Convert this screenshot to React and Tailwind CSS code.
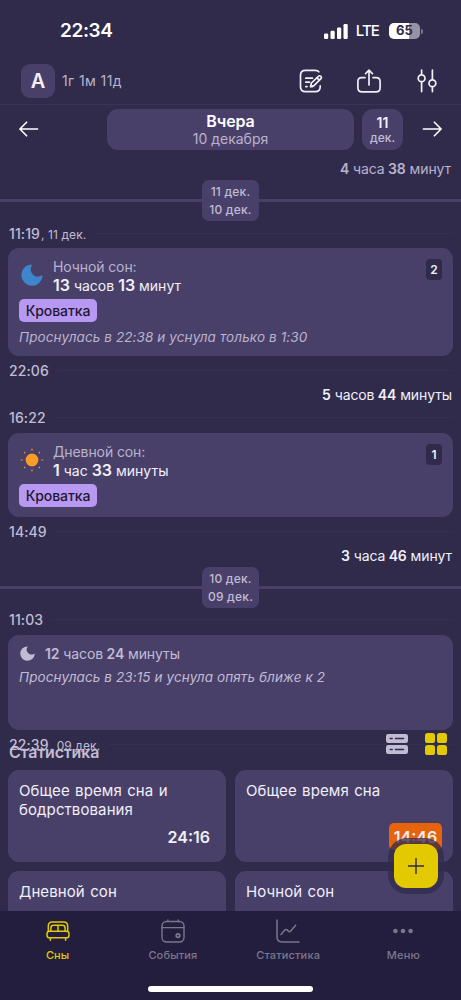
import { clsx } from 'clsx';

const MoonIcon = ({ className }) => (
  <svg viewBox="0 0 24 24" className={className} fill="currentColor">
    <path d="M10.800.6A11.600 11.600 0 1 0 23.500 13.400c.2-.9-.6-1.200-1.300-.8A7.700 7.700 0 0 1 11.700 2.100c.5-.8 0-1.600-.9-1.500Z" />
  </svg>
);

const SunIcon = () => (
  <svg viewBox="0 0 24 24" className="h-6 w-6 text-[#f99d27]" fill="none" stroke="currentColor" strokeWidth="1.200" strokeLinecap="round">
    <circle cx="12" cy="12" r="6.400" fill="currentColor" stroke="none" />
    <path d="M12 1.200v1M12 21.800v1M1.200 12h1M21.800 12h1M4.400 4.400l.5.5M19.100 19.100l.5.5M4.400 19.600l.5-.5M19.100 4.900l.5-.5" />
  </svg>
);

const NoteIcon = () => (
  <svg viewBox="0 0 24 24" className="h-6 w-6" fill="none" stroke="currentColor" strokeWidth="1.700" strokeLinecap="round" strokeLinejoin="round">
    <path d="M19.800 2.800C19 1.700 17.800 1.400 16 1.400H6.500C3 1.400 1.500 2.700 1.500 6.200v11.600c0 3.500 1.500 4.900 5 4.900h9.800c3.500 0 4.900-1.400 4.900-4.900v-1" />
    <path d="M6.800 9.200h6.600M6.800 13.200h3.600M6.800 17.600h1.200M11.600 17.600h2" />
    <path d="m12.400 14 7-6.700a1.700 1.700 0 0 1 2.500 2.400l-6.900 6.900-3.400.9Z" />
    <path d="m18 8.800 2.300 2.300" />
  </svg>
);

const ShareIcon = () => (
  <svg viewBox="0 0 24 24" className="h-6 w-6" fill="none" stroke="currentColor" strokeWidth="1.700" strokeLinecap="round" strokeLinejoin="round">
    <path d="M8 8.600H4.800C2 8.600.9 9.800.9 12.500v6.200c0 2.900 1.300 4.100 4.200 4.100h13.800c2.900 0 4.200-1.200 4.200-4.100v-6.200c0-2.700-1.100-3.900-3.900-3.900H16" />
    <path d="M12 16V1.200M8.600 4.600 12 1.200l3.400 3.400" />
  </svg>
);

const SlidersIcon = () => (
  <svg viewBox="0 0 24 24" className="h-6 w-6" fill="none" stroke="currentColor" strokeWidth="1.700" strokeLinecap="round">
    <path d="M6.600 1.200v3.600M6.600 13v9.600M17.400 1.200v9M17.400 18.400v4.200" />
    <circle cx="6.600" cy="9.200" r="3.400" />
    <circle cx="17.400" cy="14.300" r="3.400" />
  </svg>
);

const Arrow = ({ className }) => (
  <svg viewBox="0 0 20 16" className={clsx('-mt-px h-4 w-5', className)} fill="none" stroke="#fff" strokeWidth="1.600" strokeLinecap="round" strokeLinejoin="round">
    <path d="M1.200 8h17.400M7.600 1.200.9 8l6.700 6.800" />
  </svg>
);

const BedIcon = () => (
  <svg viewBox="0 0 24 20" className="h-5 w-6" fill="none" stroke="currentColor" strokeWidth="1.500" strokeLinecap="round" strokeLinejoin="round">
    <path d="M2.300 10.300V5.200C2.300 2.300 3.500 1 6.400 1h11.200c2.900 0 4.100 1.300 4.100 4.200v5.100" />
    <path d="M4.900 10V7c0-1.900.8-2.700 2.700-2.700h8.800c1.900 0 2.700.8 2.700 2.700v3M12 4.300V10" />
    <rect x="1" y="10.200" width="22" height="6.600" rx="2.600" />
    <path d="M4.400 17v2.200M19.600 17v2.200" />
  </svg>
);

const CalendarIcon = () => (
  <svg viewBox="0 0 24 24" className="h-6 w-6" fill="none" stroke="currentColor" strokeWidth="1.400" strokeLinecap="round">
    <rect x="1" y="2.500" width="22" height="20.500" rx="4.500" />
    <path d="M1 8.600h22M6.900.9v1.600M17.200.9v1.600" />
    <circle cx="17" cy="16.600" r="1.800" strokeWidth="1.700" />
  </svg>
);

const ChartIcon = () => (
  <svg viewBox="0 0 24 24" className="h-6 w-6" fill="none" stroke="currentColor" strokeWidth="1.500" strokeLinecap="round" strokeLinejoin="round">
    <path d="M1 1v16.800C1 21.500 2.500 23 6.200 23H23" />
    <path d="M5 15.400 8.800 11c.7-.8 1.600-.8 2.300-.1l1.300 1.300c.7.7 1.600.7 2.300-.1L19.600 6.200" />
  </svg>
);

const DotsIcon = () => (
  <svg viewBox="0 0 24 24" className="h-6 w-6" fill="currentColor">
    <circle cx="4.400" cy="12" r="2.300" />
    <circle cx="12" cy="12" r="2.300" />
    <circle cx="19.600" cy="12" r="2.300" />
  </svg>
);

const ListViewIcon = () => (
  <svg viewBox="0 0 22 20" className="h-5 w-[22px]">
    <rect width="22" height="9" rx="2.200" fill="#c1bcd3" />
    <rect y="11" width="22" height="9" rx="2.200" fill="#c1bcd3" />
    <path d="M4.200 4.500h2M9.500 4.500h8M4.200 15.500h2M9.500 15.500h8" stroke="#302b4b" strokeWidth="1.500" strokeLinecap="round" />
  </svg>
);

const GridViewIcon = () => (
  <svg viewBox="0 0 22 22" className="h-[22px] w-[22px]" fill="#e2c900">
    <rect width="10" height="10" rx="2.600" />
    <rect x="12" width="10" height="10" rx="2.600" />
    <rect y="12" width="10" height="10" rx="2.600" />
    <rect x="12" y="12" width="10" height="10" rx="2.600" />
  </svg>
);

const StatusBar = () => (
  <div className="flex h-[58px] shrink-0 items-center justify-between pt-1 pr-[38px] pl-[60px] text-white">
    <span className="text-[19px] font-semibold tracking-[-0.4px]">22:34</span>
    <div className="flex items-center">
      <svg viewBox="0 0 24 15" className="h-[15px] w-6" fill="currentColor">
        <rect y="9.500" width="4.200" height="5.500" rx="1.200" />
        <rect x="6.500" y="6.800" width="4.200" height="8.200" rx="1.200" />
        <rect x="13" y="3.600" width="4.200" height="11.400" rx="1.200" />
        <rect x="19.500" width="4.200" height="15" rx="1.200" />
      </svg>
      <span className="ml-2 pt-px text-[15px] font-medium tracking-[-0.900px]">LTE</span>
      <div className="ml-[10px] flex h-4 w-[31px] items-center justify-center rounded-[5px] bg-linear-to-r from-white from-65% to-[#9693a5] to-65% text-[13px] font-bold text-[#302b4b]">
        65
      </div>
      <div className="ml-px h-[5px] w-[2px] rounded-r-full bg-[#7d7990]" />
    </div>
  </div>
);

const Header = () => (
  <div className="flex h-[47px] shrink-0 items-center border-b border-[#3a3455] pr-[22px] pl-[21px] text-[#f1eff8]">
    <div className="flex h-[34px] w-[34px] items-center justify-center rounded-[9px] bg-[#49406a] text-[20px] font-semibold">A</div>
    <span className="ml-[7px] pb-px text-[14px] tracking-[0.4px] text-[#b9b3cd]">1г 1м 11д</span>
    <div className="ml-auto flex gap-[34px]">
      <NoteIcon />
      <ShareIcon />
      <SlidersIcon />
    </div>
  </div>
);

const DateNav = () => (
  <div className="flex h-[45px] shrink-0 items-center pt-1 pr-[19px] pl-[19px]">
    <Arrow />
    <div className="ml-[68px] flex h-[41px] w-[247px] flex-col items-center justify-center rounded-[11px] bg-[#49406a]">
      <span className="text-[16px] leading-[19px] font-semibold tracking-[-0.1px] text-white">Вчера</span>
      <span className="text-[14px] leading-[16px] text-[#b9b3cd]">10 декабря</span>
    </div>
    <div className="ml-2 flex h-[41px] w-[41px] flex-col items-center justify-center rounded-[11px] bg-[#49406a]">
      <span className="text-[14px] leading-4 font-semibold text-[#f1eff8]">11</span>
      <span className="text-[12px] leading-[14px] font-medium text-[#c1bcd3]">дек.</span>
    </div>
    <Arrow className="ml-auto rotate-180" />
  </div>
);

// numbers are emphasised, units stay regular
const Duration = ({ parts, large, className }) => (
  <span className={clsx('whitespace-pre', className)}>
    {parts.map((part, i) => (
      <span key={i} className={i % 2 === 0 ? clsx('font-semibold', large && 'text-[16px]') : 'font-normal'}>
        {i > 0 && ' '}
        {part}
      </span>
    ))}
  </span>
);

const Gap = ({ parts, className }) => (
  <div className={clsx('flex shrink-0 items-center justify-end text-[14px] tracking-[-0.100px]', className)}>
    <Duration parts={parts} />
  </div>
);

const DayDivider = ({ top, bottom }) => (
  <div className="flex h-[41px] shrink-0 items-center">
    <div className="h-[3px] flex-1 bg-[#49406a]" />
    <div className="flex h-[41px] w-[57px] flex-col items-center justify-center rounded-[7px] bg-[#49406a] text-[12px] leading-[18px] font-medium tracking-[0.2px] text-[#c1bcd3]">
      <span>{top}</span>
      <span>{bottom}</span>
    </div>
    <div className="h-[3px] flex-1 bg-[#49406a]" />
  </div>
);

const TimeMark = ({ time, date, className }) => (
  <div className={clsx('flex shrink-0 items-center gap-2 pr-2 pl-[9px] text-[#c1bcd3]', className)}>
    <span className="text-[12px] tracking-[0.1px]">
      <span className="text-[14px] font-medium">{time}</span>
      {date && <span className="ml-px">, {date}</span>}
    </span>
    <div className="h-px flex-1 bg-[#343052]" />
  </div>
);

const SleepCard = ({ icon, title, parts, count, tag, note, className }) => (
  <div className={clsx('mx-2 shrink-0 rounded-[11px] bg-[#49406a] px-[11px]', className)}>
    <div className="flex items-start pt-[10px]">
      <div className="mt-[5px] ml-px flex h-6 w-6 items-center justify-center">{icon}</div>
      <div className="ml-[9px] flex flex-col">
        <span className="text-[14px] leading-[18px] tracking-[-0.1px] text-[#b9b3cd]">{title}</span>
        <Duration parts={parts} large className="text-[14px] leading-[19px] text-[#f1eff8]" />
      </div>
      <div className="mt-px ml-auto flex h-[21px] w-4 items-center justify-center rounded-[4px] bg-[#302b4b] text-[12px] font-semibold text-[#f1eff8]">
        {count}
      </div>
    </div>
    <div className="mt-1 flex h-[23px] w-[78px] items-center justify-center rounded-[5px] bg-[#b798f3] text-[14px] font-medium tracking-[-0.1px] text-[#1d1830]">
      {tag}
    </div>
    {note && <p className="mt-[5px] text-[13.500px] leading-5 tracking-[0.100px] text-[#b9b3cd] italic">{note}</p>}
  </div>
);

const StatCard = ({ title, children }) => (
  <div className="flex h-[92px] flex-col rounded-[11px] bg-[#49406a] px-[11px] pt-[11px]">
    <span className="text-[15px] leading-[19px] tracking-[0.100px] [word-spacing:1px] text-[#f1eff8]">{title}</span>
    {children}
  </div>
);

const tabs = [
  { label: 'Сны', icon: <BedIcon />, active: true },
  { label: 'События', icon: <CalendarIcon /> },
  { label: 'Статистика', icon: <ChartIcon /> },
  { label: 'Меню', icon: <DotsIcon /> },
];

const TabBar = () => (
  <div className="flex h-[89px] shrink-0 flex-col justify-between bg-[#231e3d] pb-2">
    <div className="grid grid-cols-4">
      {tabs.map((tab) => (
        <div key={tab.label} className={clsx('flex flex-col items-center pt-2', tab.active ? 'text-[#e2c900]' : 'text-[#7b778b]')}>
          <div className="flex h-6 items-center">{tab.icon}</div>
          <span className="mt-1 text-[11px] leading-4 font-medium tracking-[0.150px]">{tab.label}</span>
        </div>
      ))}
    </div>
    <div className="h-[6px] w-[165px] self-center rounded-full bg-white" />
  </div>
);

const App = () => (
  <div className="relative flex h-[1000px] w-[461px] flex-col overflow-hidden bg-[#302b4b] font-['Inter','Noto_Sans',sans-serif]">
    <StatusBar />
    <Header />
    <DateNav />
    <main className="flex min-h-0 flex-1 flex-col overflow-hidden">
      <Gap parts={['4', 'часа', '38', 'минут']} className="h-[30px] pt-[6px] pr-[10px] text-[#b9b3cd]" />
      <DayDivider top="11 дек." bottom="10 дек." />
      <TimeMark time="11:19" date="11 дек." className="h-[27px] pb-[3px]" />
      <SleepCard
        className="h-[108px]"
        icon={<MoonIcon className="h-[22px] w-[22px] text-[#3d86cb]" />}
        title="Ночной сон:"
        parts={['13', 'часов', '13', 'минут']}
        count={2}
        tag="Кроватка"
        note="Проснулась в 22:38 и уснула только в 1:30"
      />
      <TimeMark time="22:06" className="h-[27px] pt-[2px]" />
      <Gap parts={['5', 'часов', '44', 'минуты']} className="h-[22px] pr-[9px] text-[#f1eff8]" />
      <TimeMark time="16:22" className="h-[28px] pb-[4px]" />
      <SleepCard className="h-[84px]" icon={<SunIcon />} title="Дневной сон:" parts={['1', 'час', '33', 'минуты']} count={1} tag="Кроватка" />
      <TimeMark time="14:49" className="h-[27px] pt-[2px]" />
      <Gap parts={['3', 'часа', '46', 'минут']} className="h-[23px] pr-[9px] text-[#f1eff8]" />
      <DayDivider top="10 дек." bottom="09 дек." />
      <TimeMark time="11:03" className="h-[27px] pb-[5px]" />
      <div className="mx-2 h-[95px] shrink-0 rounded-[11px] bg-[#49406a] px-[11px] pt-[9px] text-[#c1bcd3]">
        <div className="flex h-[18px] items-center gap-[10px] pl-px">
          <MoonIcon className="h-[15px] w-[15px]" />
          <Duration parts={['12', 'часов', '24', 'минуты']} className="text-[14px] tracking-[-0.1px]" />
        </div>
        <p className="mt-[5px] text-[13.500px] leading-5 tracking-[0.100px] italic">Проснулась в 23:15 и уснула опять ближе к 2</p>
      </div>
      <TimeMark time="22:39" date="09 дек." className="h-[27px] pt-px" />
      <section className="-mt-[27px] shrink-0 px-2">
        <div className="flex h-10 items-start justify-between pr-[6px]">
          <h2 className="pt-[12px] pl-px text-[16px] leading-5 font-semibold tracking-[-0.2px] text-[#c1bcd3]">Статистика</h2>
          <div className="flex items-center gap-[17px] pt-[3px]">
            <ListViewIcon />
            <GridViewIcon />
          </div>
        </div>
        <div className="grid grid-cols-2 gap-[9px]">
          <StatCard title="Общее время сна и бодрствования">
            <span className="mt-[6px] mr-[5px] self-end text-[16px] font-semibold text-[#f1eff8]">24:16</span>
          </StatCard>
          <StatCard title="Общее время сна">
            <span className="mt-[23px] flex h-[27px] w-[53px] shrink-0 items-center justify-center self-end rounded-[5px] bg-[#e8640c] text-[16px] font-semibold text-[#f1eff8]">
              14:46
            </span>
          </StatCard>
          <StatCard title="Дневной сон" />
          <StatCard title="Ночной сон" />
        </div>
      </section>
    </main>
    <TabBar />
    <button className="absolute top-[838px] left-[388px] flex h-[56px] w-[56px] items-center justify-center rounded-[19px] bg-[#302b4b]/75" aria-label="Добавить">
      <span className="flex h-11 w-11 items-center justify-center rounded-[12px] bg-[#e2c900]">
        <svg viewBox="0 0 16 16" className="h-4 w-4" stroke="#302b4b" strokeWidth="1.400">
          <path d="M8 0v16M0 8h16" />
        </svg>
      </span>
    </button>
  </div>
);

export default App;
